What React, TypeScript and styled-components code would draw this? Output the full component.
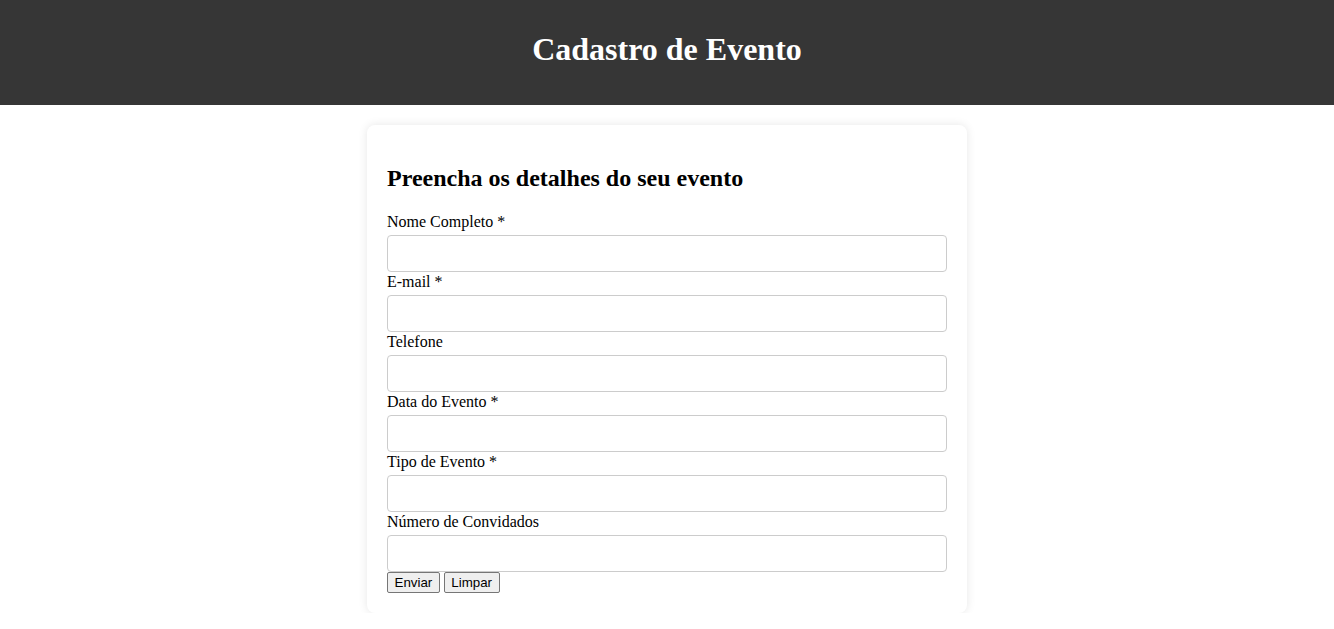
import styled, { createGlobalStyle } from 'styled-components';

const GlobalStyle = createGlobalStyle`
  body {
    margin: 0;
    font-family: "Liberation Serif", "Times New Roman", serif;
    color: #000;
    background: #fff;
  }
`;

const Header = styled.header`
  background-color: #363636;
  color: #fff;
  text-align: center;
  padding: 31px 0 37px;

  h1 {
    margin: 0;
    font-size: 32px;
    line-height: 37px;
    font-weight: bold;
  }
`;

const Card = styled.main`
  box-sizing: border-box;
  width: 600px;
  margin: 20px auto 0;
  padding: 20px;
  background: #fff;
  border-radius: 8px;
  box-shadow: 0 0 10px rgba(0, 0, 0, 0.1);

  h2 {
    margin: 20px 0;
    font-size: 24px;
    line-height: 27px;
    font-weight: bold;
  }
`;

const Form = styled.form`
  display: flex;
  flex-direction: column;
`;

const Label = styled.label`
  display: block;
  font-size: 16px;
  line-height: 19px;
`;

const Input = styled.input`
  box-sizing: border-box;
  display: block;
  width: 100%;
  height: 37px;
  margin: 4px 0 0;
  padding: 10px;
  border: 1px solid #ccc;
  border-radius: 4px;
  font-family: "Liberation Sans", Arial, sans-serif;
  font-size: 13.33px;
  outline: none;
`;

const Actions = styled.div`
  display: flex;
  gap: 4px;
`;

const Button = styled.button`
  box-sizing: border-box;
  height: 21px;
  font-family: "Liberation Sans", Arial, sans-serif;
  font-size: 13.33px;
  line-height: 15px;
  padding: 2px 6.5px;
  background: #efefef;
  color: #000;
  border: 1px solid #767676;
  border-radius: 2px;
`;

const fields = [
  { id: 'nome', label: 'Nome Completo *', type: 'text' },
  { id: 'email', label: 'E-mail *', type: 'email' },
  { id: 'telefone', label: 'Telefone', type: 'tel' },
  { id: 'data', label: 'Data do Evento *', type: 'text' },
  { id: 'tipo', label: 'Tipo de Evento *', type: 'text' },
  { id: 'convidados', label: 'Número de Convidados', type: 'number' },
];

export default function App() {
  return (
    <>
      <GlobalStyle />
      <Header>
        <h1>Cadastro de Evento</h1>
      </Header>
      <Card>
        <h2>Preencha os detalhes do seu evento</h2>
        <Form onSubmit={(e) => e.preventDefault()}>
          {fields.map(({ id, label, type }) => (
            <div key={id}>
              <Label htmlFor={id}>{label}</Label>
              <Input id={id} name={id} type={type} />
            </div>
          ))}
          <Actions>
            <Button type="submit">Enviar</Button>
            <Button type="reset">Limpar</Button>
          </Actions>
        </Form>
      </Card>
    </>
  );
}
